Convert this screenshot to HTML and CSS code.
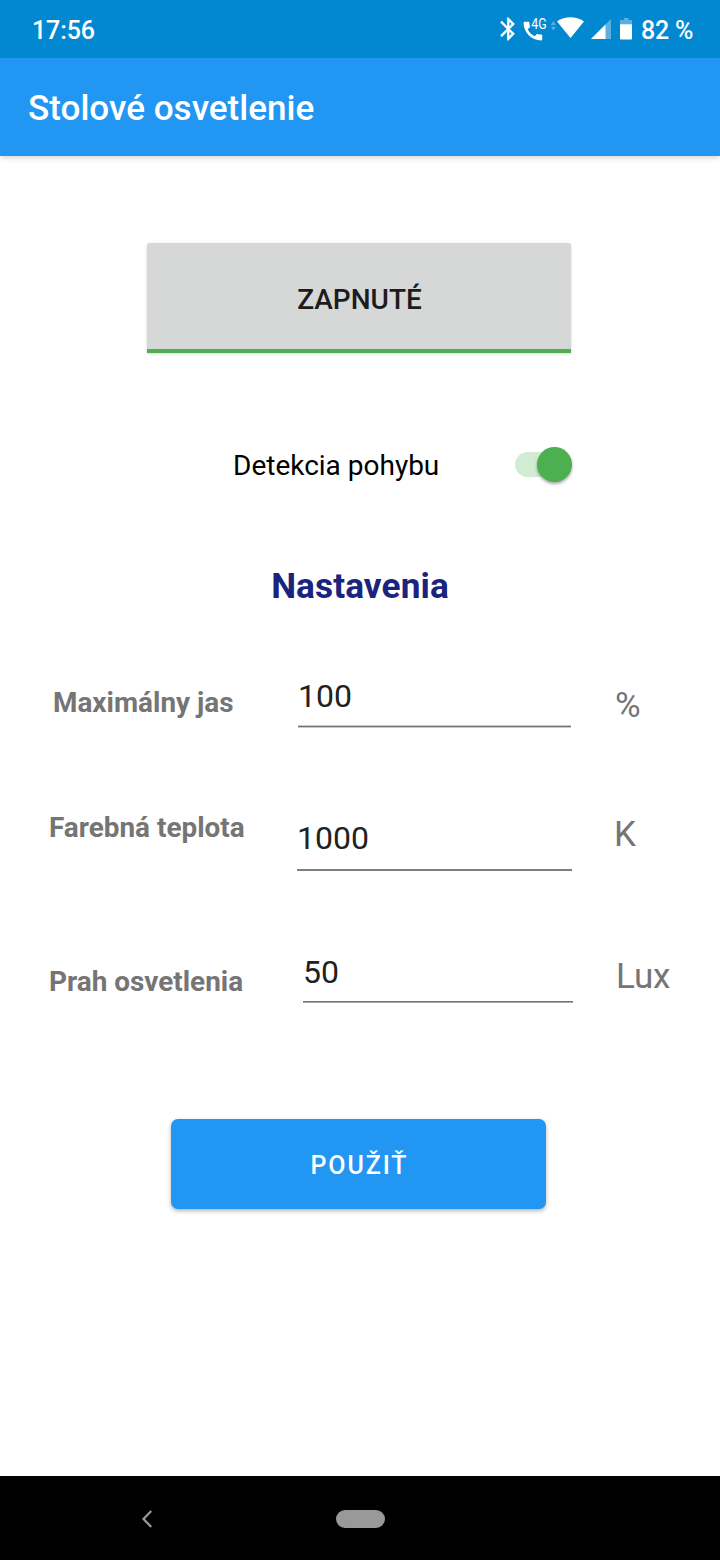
FILE: index.html
```html
<!DOCTYPE html>
<html lang="sk">
<head>
<meta charset="utf-8">
<title>Stolové osvetlenie</title>
<link rel="stylesheet" href="styles.css">
</head>
<body>
<div class="screen">
  <header class="status">
    <span class="clock">17:56</span>
    <svg class="status-icons" width="150" height="40" viewBox="490 10 150 40" fill="#fff">
      <path transform="translate(494.500 15.100) scale(1.150)" stroke="#fff" stroke-width=".1" d="M17.710 7.710 12 2h-1v7.590L6.410 5 5 6.410 10.590 12 5 17.590 6.410 19 11 14.410V22h1l5.710-5.710L13.410 12zM13 5.830l1.880 1.880L13 9.590zm1.880 10.460L13 18.170v-3.760z"/>
      <path transform="translate(520.400 18.600) scale(1.040)" d="M20.010 15.380c-1.230 0-2.420-.2-3.530-.56-.35-.12-.74-.03-1.010.24l-1.570 1.970c-2.830-1.350-5.480-3.900-6.890-6.830l1.950-1.660c.27-.28.35-.67.24-1.020-.37-1.110-.56-2.300-.56-3.530 0-.54-.45-.99-.99-.99H4.190C3.650 3 3 3.240 3 3.990 3 13.280 10.730 21 20.010 21c.71 0 .99-.63.99-1.180v-3.450c0-.54-.45-.99-.99-.99z"/>
      <text class="net" x="531.300" y="29" textLength="15.300" lengthAdjust="spacingAndGlyphs">4G</text>
      <path d="m553.400 21 2.500 3.900h-5zM550.900 26.700h5l-2.500 3.900z" opacity=".35"/>
      <path d="M570.500 38 557 21.500c8-5.600 19-5.600 27 0z"/>
      <path d="M611 19v20h-20z" opacity=".35"/>
      <path d="M605.500 24.500V39H591z"/>
      <path d="M624 18h4.500v2h3.500v4.500h-12V20h4z" opacity=".35"/>
      <path d="M620 24.300h12V38.500q0 1-1 1h-10q-1 0-1-1z"/>
    </svg>
    <span class="charge">82 %</span>
  </header>
  <div class="appbar"><h1 class="title">Stolové osvetlenie</h1></div>
  <main class="content">
    <button class="toggle">ZAPNUTÉ</button>
    <div class="motion">
      <span class="motion-label">Detekcia pohybu</span>
      <span class="switch"><span class="thumb"></span></span>
    </div>
    <h2 class="heading">Nastavenia</h2>
    <div class="row brightness">
      <label class="name">Maximálny jas</label>
      <div class="field">100</div>
      <span class="unit">%</span>
    </div>
    <div class="row temperature">
      <label class="name">Farebná teplota</label>
      <div class="field">1000</div>
      <span class="unit">K</span>
    </div>
    <div class="row threshold">
      <label class="name">Prah osvetlenia</label>
      <div class="field">50</div>
      <span class="unit">Lux</span>
    </div>
    <button class="apply">POUŽIŤ</button>
  </main>
  <nav class="navbar">
    <svg class="back" width="12" height="20" viewBox="0 0 12 20"><path d="M11.300 2 3.500 10l7.800 8" fill="none" stroke="#9b9b9b" stroke-width="2.200"/></svg>
    <span class="home"></span>
  </nav>
</div>
</body>
</html>
```
FILE: styles.css
```css
* { box-sizing: border-box; }
body { margin: 0; font-family: Roboto, sans-serif; background: #fff; }
.screen { width: 720px; height: 1560px; display: flex; flex-direction: column; line-height: 40px; }
.status { position: relative; z-index: 1; height: 58px; background: #0288d1; color: #fff; display: flex; align-items: flex-start; padding: 10px 0 0 32px; font-size: 25px; font-weight: 500; }
.clock { width: 458px; padding-top: 1px; letter-spacing: -.1px; }
.charge { padding: 1px 0 0 1px; white-space: nowrap; letter-spacing: -.2px; }
.status-icons { flex: none; }
.net { font-family: Roboto, sans-serif; font-size: 14.500px; font-weight: 400; letter-spacing: 0; }
.appbar { height: 98px; background: #2196f3; box-shadow: 0 1px 6px rgba(0,0,0,.22); padding: 30px 28px 0; }
.title { margin: 0; color: #fff; font-size: 35.100px; font-weight: 500; line-height: 40px; }
.content { flex: 1; display: flex; flex-direction: column; }
.toggle, .apply { border: 0; font-family: inherit; font-weight: 500; padding: 0; text-align: center; }
.toggle { width: 424px; height: 110px; margin: 87px 0 0 147px; background: #d6d7d7; border-bottom: 4px solid #4caf50; border-radius: 3px 3px 0 0; box-shadow: 0 1px 3px rgba(0,0,0,.16); color: #1c1c1c; font-size: 28px; line-height: 40px; padding: 7px 0 0 1px; }
.motion { height: 40px; margin: 92px 0 0 233px; display: flex; font-size: 28px; color: #000; align-items: flex-start; }
.motion-label { width: 282px; padding-top: 1px; }
.switch { width: 57px; height: 25px; border-radius: 13px; margin-top: 7px; background: #d2ecd3; display: flex; align-items: center; justify-content: flex-end; }
.thumb { width: 35px; height: 35px; flex: none; border-radius: 50%; background: #4caf50; box-shadow: 0 2px 3px rgba(0,0,0,.35); }
.heading { margin: 81px 0 0; text-align: center; font-size: 35.200px; letter-spacing: .1px; font-weight: 700; color: #1a237e; line-height: 40px; }
.row { display: flex; align-items: flex-start; }
.name { font-size: 27.900px; font-weight: 700; color: #757575; white-space: nowrap; }
.field { font-size: 32px; color: #212121; border-bottom: 2px solid #7f7f7f; }
.unit { font-size: 35px; color: #757575; }
.brightness { height: 58px; margin-top: 64px; padding-left: 53px; }
.brightness .name { width: 245px; margin-top: 13px; }
.brightness .field { width: 273px; margin-top: 6px; height: 51px; border-bottom: 1px solid #757575; box-shadow: 0 1px #c8c8c8, inset 0 -1px #c8c8c8; }
.brightness .unit { margin: 16px 0 0 44px; }
.temperature { height: 71px; margin-top: 72px; padding-left: 49px; }
.temperature .name { width: 248px; margin-top: 8px; }
.temperature .field { width: 275px; margin-top: 18px; height: 53px; }
.temperature .unit { margin: 15px 0 0 42px; }
.threshold { height: 63px; margin-top: 69px; padding-left: 49px; }
.threshold .name { width: 254px; margin-top: 22px; }
.threshold .field { width: 270px; margin-top: 12px; height: 50px; border-bottom: 1px solid #757575; box-shadow: 0 1px #a4a4a4; }
.threshold .unit { margin: 17px 0 0 43px; letter-spacing: -.2px; }
.apply { width: 375px; height: 90px; margin: 116px 0 0 171px; border-radius: 7px; background: #2196f3; color: #fff; font-size: 25px; letter-spacing: 1.900px; box-shadow: 0 2px 4px rgba(0,0,0,.3); padding: 3px 0 0 2px; }
.navbar { height: 84px; background: #000; display: flex; align-items: center; padding: 1px 0 0 140px; }
.home { width: 49px; height: 18px; border-radius: 9px; background: #999; margin-left: 184px; }
```
